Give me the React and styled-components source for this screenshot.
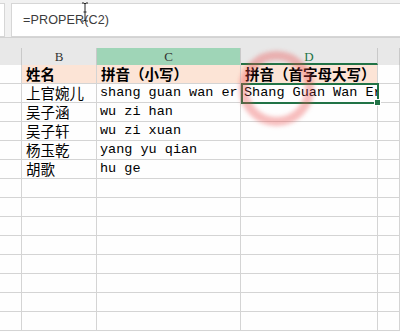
import React from 'react'
import styled, { createGlobalStyle } from 'styled-components'

const Global = createGlobalStyle`
  html, body {
    margin: 0;
    padding: 0;
    background: #fefefe;
  }
  body {
    width: 400px;
    height: 332px;
    overflow: hidden;
  }
`

const Page = styled.div`
  position: relative;
  width: 400px;
  height: 332px;
  overflow: hidden;
  background: #fefefe;
`

const FormulaBar = styled.div`
  display: flex;
  gap: 6px;
  height: 37px;
  padding-top: 3px;
  box-sizing: border-box;
  background: #f1f1f1;
  margin-left: -20px;
  margin-right: -10px;
`

const Box = styled.div`
  flex: ${p => (p.grow ? 1 : 'none')};
  width: ${p => (p.grow ? 'auto' : '23px')};
  background: #ffffff;
  border: 1px solid #d6d6d6;
  display: flex;
  align-items: center;
  padding-left: ${p => (p.grow ? '11px' : '0')};
  font-family: "Liberation Sans", Arial, sans-serif;
  font-size: 12.6px;
  color: #3c3c3c;
  letter-spacing: 0.1px;
`

const Band = styled.div`
  height: 11px;
  background: #e8e8e8;
  border-top: 1px solid #d2d2d2;
  box-sizing: border-box;
`

const Grid = styled.div`
  display: grid;
  grid-template-columns: 22px 75px 144px 137px 22px;
  grid-auto-rows: 19px;
`

const HeadRow = styled.div`
  display: grid;
  grid-template-columns: 22px 75px 144px 137px 22px;
  height: 17px;
  background: #e8e8e8;
`

const ColHead = styled.div`
  border-right: 1px solid #c9c9c9;
  box-sizing: border-box;
  background: ${p => (p.active ? '#9fd5b7' : '#e8e8e8')};
  border-bottom: ${p => (p.selected ? '2px solid #217346' : 'none')};
  display: flex;
  align-items: center;
  justify-content: center;
  font-family: "Liberation Serif", "Times New Roman", serif;
  font-size: 13px;
  color: ${p => (p.selected ? '#217346' : '#333')};
  line-height: 1;
  padding-top: ${p => (p.selected ? '2px' : '0')};
`

const Cell = styled.div`
  position: relative;
  border-right: 1px solid #d4d4d4;
  border-bottom: 1px solid #d4d4d4;
  box-sizing: border-box;
  background: ${p => (p.head ? '#fce4d6' : 'transparent')};
  font-family: ${p =>
    p.mono
      ? '"Liberation Mono", "Courier New", monospace'
      : '"Noto Sans CJK SC", sans-serif'};
  font-size: ${p => (p.mono ? '13.5px' : '14.5px')};
  font-weight: ${p => (p.head ? 700 : 400)};
  color: #000;
  padding-left: ${p => (p.mono ? '3px' : '4px')};
  line-height: 18px;
  white-space: nowrap;
  overflow: ${p => (p.mono ? 'hidden' : 'visible')};
`

const Selected = styled.div`
  position: absolute;
  left: 241px;
  top: 83px;
  width: 138px;
  height: 21px;
  border: 2px solid #217346;
  box-sizing: border-box;
  pointer-events: none;
`

const Handle = styled.div`
  position: absolute;
  right: -4px;
  bottom: -4px;
  width: 5px;
  height: 5px;
  background: #217346;
  border: 1px solid #fff;
`

const Ring = styled.div`
  position: absolute;
  left: 239px;
  top: 51px;
  width: 75px;
  height: 75px;
  border-radius: 50%;
  border: 9px solid rgba(235, 75, 75, 0.36);
  box-sizing: border-box;
  filter: blur(2px);
  pointer-events: none;
`

const Cursor = styled.svg`
  position: absolute;
  left: 81px;
  top: 2px;
`

const rows = [
  ['姓名', '拼音（小写）', '拼音（首字母大写）', true],
  ['上官婉儿', 'shang guan wan er', 'Shang Guan Wan Er'],
  ['吴子涵', 'wu zi han', ''],
  ['吴子轩', 'wu zi xuan', ''],
  ['杨玉乾', 'yang yu qian', ''],
  ['胡歌', 'hu ge', ''],
]

while (rows.length < 14) rows.push(['', '', ''])

export default function App() {
  return (
    <Page>
      <Global />
      <FormulaBar>
        <Box />
        <Box grow>=PROPER(C2)</Box>
      </FormulaBar>
      <Band />
      <HeadRow>
        <ColHead />
        <ColHead>B</ColHead>
        <ColHead active>C</ColHead>
        <ColHead selected>D</ColHead>
        <ColHead />
      </HeadRow>
      <Grid>
        {rows.map((r, i) => (
          <React.Fragment key={i}>
            <Cell />
            <Cell head={r[3]}>{r[0]}</Cell>
            <Cell head={r[3]} mono={!r[3]}>{r[1]}</Cell>
            <Cell head={r[3]} mono={!r[3]}>{r[2]}</Cell>
            <Cell />
          </React.Fragment>
        ))}
      </Grid>
      <Selected>
        <Handle />
      </Selected>
      <Ring />
      <Cursor width="8" height="20" viewBox="0 0 8 20">
        <path
          d="M1 1h2l1 1 1-1h2M4 2v16M1 19h2l1-1 1 1h2M2.5 10h3"
          stroke="#222"
          strokeWidth="1"
          fill="none"
        />
      </Cursor>
    </Page>
  )
}
